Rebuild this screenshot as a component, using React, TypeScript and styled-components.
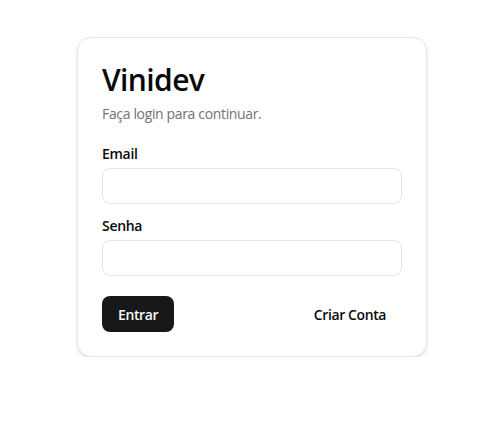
import React from "react";
import styled, { createGlobalStyle } from "styled-components";

const Global = createGlobalStyle`
  html, body { margin: 0; padding: 0; background: #ffffff; }
  body { font-family: "Segoe UI", "Open Sans", "Noto Sans", sans-serif; color: #0a0a0a; }
  * { box-sizing: border-box; }
`;

const Page = styled.div`
  padding: 37px 0 0 77px;
`;

const Card = styled.form`
  width: 350px;
  background: #ffffff;
  border: 1px solid #e4e4e7;
  border-radius: 14px;
  box-shadow: 0 2px 4px rgba(0, 0, 0, 0.08), 0 1px 2px rgba(0, 0, 0, 0.04);
  padding: 24px;
  display: flex;
  flex-direction: column;
`;

const Title = styled.h1`
  margin: 0;
  font-size: 30px;
  line-height: 36px;
  font-weight: 600;
  letter-spacing: -0.6px;
  color: #09090b;
`;

const Subtitle = styled.p`
  margin: 6px 0 0;
  font-size: 14px;
  line-height: 20px;
  letter-spacing: -0.35px;
  color: #71717a;
`;

const Fields = styled.div`
  margin-top: 20px;
  display: flex;
  flex-direction: column;
  gap: 12px;
`;

const Field = styled.div`
  display: flex;
  flex-direction: column;
  gap: 4px;
`;

const Label = styled.label`
  font-size: 14px;
  line-height: 20px;
  font-weight: 600;
  letter-spacing: -0.3px;
  color: #09090b;
`;

const Input = styled.input`
  height: 36px;
  width: 100%;
  border: 1px solid #e4e4e7;
  border-radius: 8px;
  padding: 0 12px;
  font: inherit;
  font-size: 14px;
  background: #ffffff;
  outline: none;
`;

const Actions = styled.div`
  margin-top: 20px;
  display: flex;
  justify-content: space-between;
  align-items: center;
`;

const Button = styled.button<{ $variant?: "primary" | "ghost" }>`
  height: 36px;
  padding: 0 16px;
  border-radius: 8px;
  border: none;
  font-family: inherit;
  font-size: 14px;
  font-weight: 600;
  letter-spacing: -0.4px;
  cursor: pointer;
  background: ${(p) => (p.$variant === "ghost" ? "transparent" : "#18181b")};
  color: ${(p) => (p.$variant === "ghost" ? "#09090b" : "#fafafa")};
`;

export default function App() {
  return (
    <>
      <Global />
      <Page>
        <Card onSubmit={(e) => e.preventDefault()}>
          <Title>Vinidev</Title>
          <Subtitle>Faça login para continuar.</Subtitle>
          <Fields>
            <Field>
              <Label htmlFor="email">Email</Label>
              <Input id="email" type="email" />
            </Field>
            <Field>
              <Label htmlFor="senha">Senha</Label>
              <Input id="senha" type="password" />
            </Field>
          </Fields>
          <Actions>
            <Button type="submit">Entrar</Button>
            <Button type="button" $variant="ghost">Criar Conta</Button>
          </Actions>
        </Card>
      </Page>
    </>
  );
}
